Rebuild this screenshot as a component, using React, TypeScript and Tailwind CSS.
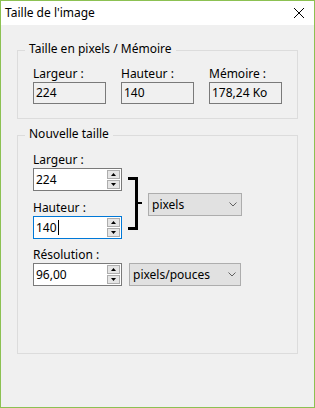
import React from 'react';

const font = "font-['Noto_Sans',sans-serif]";

function SpinButtons() {
  return (
    <div className="flex flex-col gap-[1px]">
      <div className="w-[13px] h-[9px] border border-[#adadad] bg-[#e5e5e5] flex items-center justify-center">
        <svg width="5" height="3" viewBox="0 0 5 3">
          <polygon points="2.5,0 5,3 0,3" fill="#000" />
        </svg>
      </div>
      <div className="w-[13px] h-[9px] border border-[#adadad] bg-[#e5e5e5] flex items-center justify-center">
        <svg width="5" height="3" viewBox="0 0 5 3">
          <polygon points="0,0 5,0 2.5,3" fill="#000" />
        </svg>
      </div>
    </div>
  );
}

function SpinInput({ value, focused, caret }: { value: string; focused?: boolean; caret?: boolean }) {
  return (
    <div
      className={`w-[89px] h-[23px] border bg-white flex items-center justify-between pl-[2px] pr-[1px] ${
        focused ? 'border-[#0078d7]' : 'border-[#7a7a7a]'
      }`}
    >
      <span className="flex items-center leading-[16px]">
        {value}
        {caret && <span className="inline-block w-[1px] h-[15px] bg-black ml-[1px]" />}
      </span>
      <SpinButtons />
    </div>
  );
}

function Dropdown({ label, width }: { label: string; width: string }) {
  return (
    <div className={`${width} h-[23px] border border-[#adadad] bg-[#e1e1e1] flex items-center justify-between pl-[3px] pr-[4px]`}>
      <span className="leading-[16px]">{label}</span>
      <svg width="8" height="5" viewBox="0 0 8 5">
        <polyline points="0.5,0.5 4,4 7.5,0.5" fill="none" stroke="#606060" strokeWidth="1" />
      </svg>
    </div>
  );
}

function Group({ title, className, children }: { title: string; className: string; children: React.ReactNode }) {
  return (
    <div className={`relative ml-[16px] w-[281px] border border-[#dcdcdc] ${className}`}>
      <span className="absolute left-[7px] -top-[10px] px-[4px] bg-[#f0f0f0] leading-[16px]">{title}</span>
      {children}
    </div>
  );
}

function ReadField({ label, value }: { label: string; value: string }) {
  return (
    <div className="flex flex-col">
      <span className="leading-[16px]">{label}</span>
      <div className="w-[73px] h-[22px] border border-[#7a7a7a] bg-[#f0f0f0] flex items-center pl-[2px] leading-[16px]">
        {value}
      </div>
    </div>
  );
}

export default function App() {
  return (
    <div className={`w-[315px] h-[408px] border border-[#8cc152] bg-[#f0f0f0] flex flex-col text-[12px] text-black ${font}`}>
      {/* Title bar */}
      <div className="h-[24px] bg-white flex items-center justify-between pl-[4px] pr-[10px]">
        <span className="leading-[16px]">Taille de l'image</span>
        <svg width="10" height="10" viewBox="0 0 10 10">
          <line x1="0" y1="0" x2="10" y2="10" stroke="#000" strokeWidth="1" />
          <line x1="10" y1="0" x2="0" y2="10" stroke="#000" strokeWidth="1" />
        </svg>
      </div>

      {/* Taille en pixels / Mémoire */}
      <Group title="Taille en pixels / Mémoire" className="mt-[25px] h-[69px] pt-[15px] pl-[15px]">
        <div className="flex gap-[15px]">
          <ReadField label="Largeur :" value="224" />
          <ReadField label="Hauteur :" value="140" />
          <ReadField label="Mémoire :" value="178,24 Ko" />
        </div>
      </Group>

      {/* Nouvelle taille */}
      <Group title="Nouvelle taille" className="mt-[16px] h-[219px] pt-[16px] pl-[15px]">
        <div className="flex items-start">
          <div className="flex flex-col">
            <span className="leading-[16px]">Largeur :</span>
            <SpinInput value="224" />
            <span className="leading-[16px] mt-[9px]">Hauteur :</span>
            <SpinInput value="140" focused caret />
          </div>
          <svg className="ml-[6px] mt-[25px]" width="14" height="53" viewBox="0 0 14 53">
            <rect x="0" y="0" width="10" height="3" fill="#000" />
            <rect x="7" y="0" width="3" height="53" fill="#000" />
            <rect x="0" y="50" width="10" height="3" fill="#000" />
            <rect x="10" y="25" width="4" height="2" fill="#000" />
          </svg>
          <div className="ml-[6px] mt-[41px]">
            <Dropdown label="pixels" width="w-[94px]" />
          </div>
        </div>

        <div className="flex items-end mt-[8px]">
          <div className="flex flex-col">
            <span className="leading-[16px]">Résolution :</span>
            <SpinInput value="96,00" />
          </div>
          <div className="ml-[7px]">
            <Dropdown label="pixels/pouces" width="w-[112px]" />
          </div>
        </div>
      </Group>
    </div>
  );
}
